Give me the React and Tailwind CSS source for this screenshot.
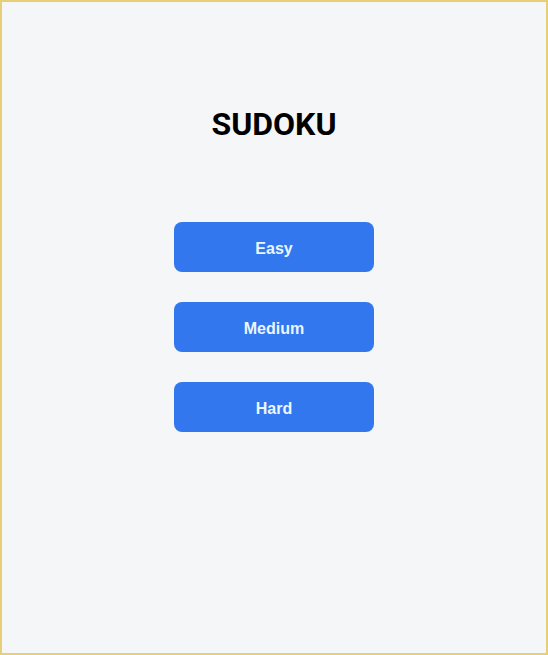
import React from "react";

const levels = ["Easy", "Medium", "Hard"];

const LevelButton = ({ label, onClick }) => (
  <button
    type="button"
    onClick={onClick}
    className="w-[200px] h-[50px] pt-[3px] rounded-lg bg-[#3277ee] text-[#eaf6ff] text-[16px] font-bold font-['Liberation_Sans',Arial,sans-serif] cursor-pointer"
  >
    {label}
  </button>
);

export default function App() {
  const startGame = (level) => {
    console.log("start", level);
  };

  return (
    <div className="h-[655px] w-full border-2 border-[#e6cf76] bg-[#f5f6f8] flex flex-col items-center pt-[103px] font-['Roboto',Arial,sans-serif]">
      <h1 className="text-[32px] leading-[38px] font-bold text-black">SUDOKU</h1>
      <div className="flex flex-col gap-[30px] mt-[79px]">
        {levels.map((level) => (
          <LevelButton key={level} label={level} onClick={() => startGame(level)} />
        ))}
      </div>
    </div>
  );
}
